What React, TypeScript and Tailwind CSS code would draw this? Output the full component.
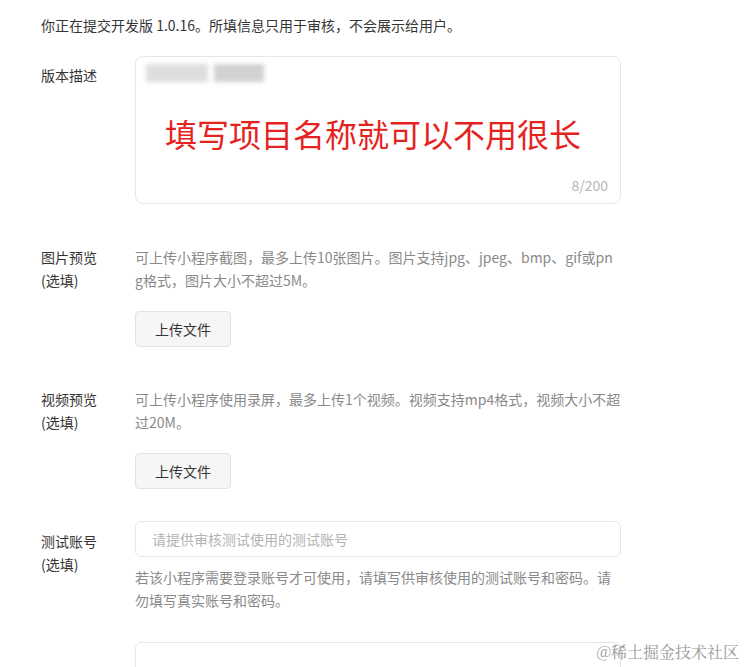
import React from "react";

const font = { fontFamily: '"Microsoft YaHei", "Noto Sans CJK SC", "Noto Sans", sans-serif' };

function Label({ lines, pt }: { lines: string[]; pt: string }) {
  return (
    <div className={`w-[94px] shrink-0 text-[14px] leading-[23px] text-[#353535] ${pt}`}>
      {lines.map((l) => (
        <div key={l}>{l}</div>
      ))}
    </div>
  );
}

function UploadButton() {
  return (
    <button className="mt-[19px] flex h-[36px] w-[96px] items-center justify-center rounded-[4px] border border-[#e3e3e3] bg-[#f6f6f6] text-[14px] text-[#353535]">
      上传文件
    </button>
  );
}

export default function App() {
  return (
    <div className="relative h-[667px] w-[745px] overflow-hidden bg-white" style={font}>
      <div className="pl-[41px] pt-[14px]">
        <div className="text-[14px] leading-[22px] text-[#353535]">
          你正在提交开发版 1.0.16。所填信息只用于审核，不会展示给用户。
        </div>

        {/* 版本描述 */}
        <div className="mt-[20px] flex">
          <Label lines={["版本描述"]} pt="pt-[8px]" />
          <div className="flex h-[148px] w-[486px] flex-col rounded-[8px] border border-[#e6e6e6] px-[10px] pt-[6px]">
            <div className="flex h-[20px] items-center gap-[6px]">
              <div className="h-[18px] w-[62px] bg-[#dedede] blur-[2px]" />
              <div className="h-[18px] w-[50px] bg-[#d2d2d2] blur-[2px]" />
            </div>
            <div className="mt-[30px] pl-[19px] text-[32px] leading-[40px] text-[#e5231e]">
              填写项目名称就可以不用很长
            </div>
            <div className="mt-auto mb-[8px] self-end pr-[2px] text-[14px] leading-[20px] text-[#b5b5b5]">
              8/200
            </div>
          </div>
        </div>

        {/* 图片预览 */}
        <div className="mt-[42px] flex">
          <Label lines={["图片预览", "(选填)"]} pt="pt-0" />
          <div className="flex w-[486px] flex-col items-start">
            <div className="whitespace-nowrap text-[14px] leading-[23px] text-[#8a8a8a]">
              可上传小程序截图，最多上传10张图片。图片支持jpg、jpeg、bmp、gif或pn
              <br />
              g格式，图片大小不超过5M。
            </div>
            <UploadButton />
          </div>
        </div>

        {/* 视频预览 */}
        <div className="mt-[41px] flex">
          <Label lines={["视频预览", "(选填)"]} pt="pt-0" />
          <div className="flex w-[486px] flex-col items-start">
            <div className="whitespace-nowrap text-[14px] leading-[23px] text-[#8a8a8a]">
              可上传小程序使用录屏，最多上传1个视频。视频支持mp4格式，视频大小不超
              <br />
              过20M。
            </div>
            <UploadButton />
          </div>
        </div>

        {/* 测试账号 */}
        <div className="mt-[32px] flex">
          <Label lines={["测试账号", "(选填)"]} pt="pt-[9px]" />
          <div className="flex w-[486px] flex-col">
            <div className="flex h-[36px] items-center rounded-[6px] border border-[#e6e6e6] px-[16px] text-[14px] text-[#b3b3b3]">
              请提供审核测试使用的测试账号
            </div>
            <div className="mt-[9px] whitespace-nowrap text-[14px] leading-[23px] text-[#8a8a8a]">
              若该小程序需要登录账号才可使用，请填写供审核使用的测试账号和密码。请
              <br />
              勿填写真实账号和密码。
            </div>
          </div>
        </div>

        {/* next input */}
        <div className="mt-[30px] flex">
          <div className="w-[94px] shrink-0" />
          <div className="h-[36px] w-[486px] rounded-[6px] border border-[#e6e6e6]" />
        </div>
      </div>

      <div
        className="absolute right-[6px] top-[641px] text-[16px] leading-[22px] text-[#9a9a9a]"
        style={{ fontFamily: '"Noto Serif CJK SC", "Liberation Serif", "Noto Sans CJK SC", serif' }}
      >
        @稀土掘金技术社区
      </div>
    </div>
  );
}
